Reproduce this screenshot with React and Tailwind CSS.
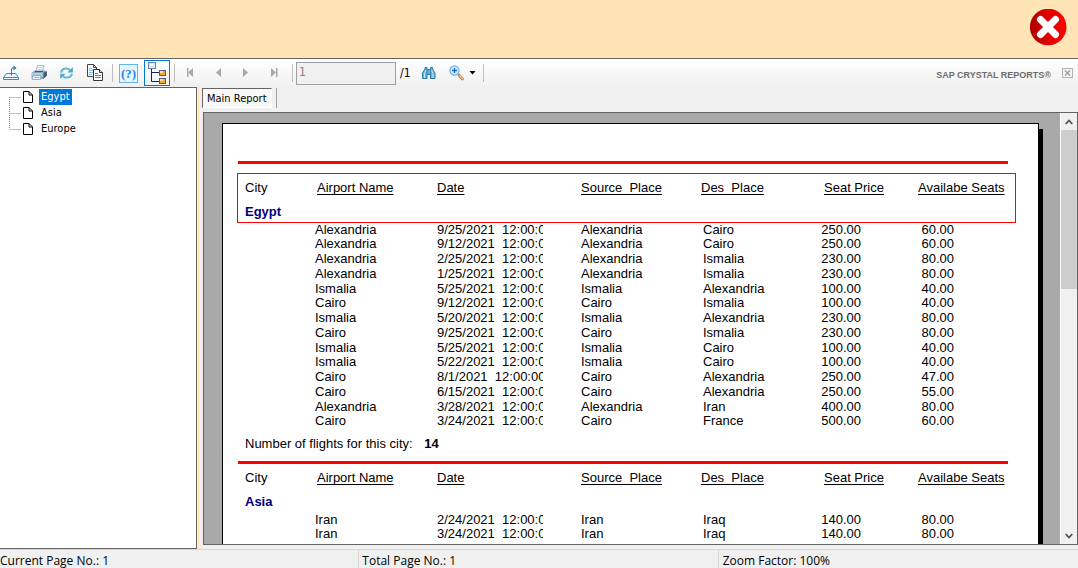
import React from "react";

const groups = [
  {
    name: "Egypt",
    selected: true,
    count: 14,
    rows: [
      ["Alexandria", "9/25/2021", "Alexandria", "Cairo", "250.00", "60.00"],
      ["Alexandria", "9/12/2021", "Alexandria", "Cairo", "250.00", "60.00"],
      ["Alexandria", "2/25/2021", "Alexandria", "Ismalia", "230.00", "80.00"],
      ["Alexandria", "1/25/2021", "Alexandria", "Ismalia", "230.00", "80.00"],
      ["Ismalia", "5/25/2021", "Ismalia", "Alexandria", "100.00", "40.00"],
      ["Cairo", "9/12/2021", "Cairo", "Ismalia", "100.00", "40.00"],
      ["Ismalia", "5/20/2021", "Ismalia", "Alexandria", "230.00", "80.00"],
      ["Cairo", "9/25/2021", "Cairo", "Ismalia", "230.00", "80.00"],
      ["Ismalia", "5/25/2021", "Ismalia", "Cairo", "100.00", "40.00"],
      ["Ismalia", "5/22/2021", "Ismalia", "Cairo", "100.00", "40.00"],
      ["Cairo", "8/1/2021", "Cairo", "Alexandria", "250.00", "47.00"],
      ["Cairo", "6/15/2021", "Cairo", "Alexandria", "250.00", "55.00"],
      ["Alexandria", "3/28/2021", "Alexandria", "Iran", "400.00", "80.00"],
      ["Cairo", "3/24/2021", "Cairo", "France", "500.00", "60.00"],
    ],
  },
  {
    name: "Asia",
    rows: [
      ["Iran", "2/24/2021", "Iran", "Iraq", "140.00", "80.00"],
      ["Iran", "3/24/2021", "Iran", "Iraq", "140.00", "80.00"],
    ],
  },
];

function Separator() {
  return <span className="h-[18px] w-px shrink-0 bg-[#bdbdbd]" />;
}

function ToolButton({ label, disabled, children }) {
  return (
    <button type="button" aria-label={label} disabled={disabled} className="flex size-4 shrink-0 items-center justify-center">
      {children}
    </button>
  );
}

function ExportIcon() {
  return (
    <svg viewBox="0 0 16 16" className="size-4" fill="none">
      <path d="M3.5 8.5h9l3 4v2H.5v-2z" fill="#e8f4fb" stroke="#3f8fb5" />
      <path d="M.5 12.5h15" stroke="#3f8fb5" />
      <path d="M8.500 10.500V4q0-1 1-1h2" stroke="#2b7fae" />
      <path d="M10.500 0.500l3 2.500-3 2.500z" fill="#2b7fae" />
    </svg>
  );
}

function PrintIcon() {
  return (
    <svg viewBox="0 0 16 16" className="size-4" fill="none">
      <path d="M5 6.500l1.500-6h6.500l-1.500 6z" fill="#f4f9ff" stroke="#8eacd0" strokeWidth="0.8" />
      <path d="M7.500 2.500h4M7 4.500h4" stroke="#a8c2e4" strokeWidth="0.7" />
      <path d="M.5 8l3-2.500h10.500l1.800 1v4L12.500 14H2L.5 13z" fill="#8fa5c6" />
      <path d="M4 6.500h8" stroke="#44546e" />
      <path d="M1 8h11v3.500H1z" fill="#bccbe2" />
      <path d="M12.500 8l3.300-1.800v4.400L12.500 14z" fill="#3f5680" />
      <path d="M2 10.500h8l-.5 4H1z" fill="#f2f8ff" stroke="#6f92c2" strokeWidth="0.7" />
      <path d="M3 12.500h5.500" stroke="#7fbdf0" />
      <path d="M11 9.300h1.500" stroke="#4fd46a" />
    </svg>
  );
}

function RefreshIcon() {
  return (
    <svg viewBox="0 0 16 16" className="size-4" fill="none">
      <path d="M2 7.500C3 3.500 8 2.500 11 5" stroke="#4aa9cc" strokeWidth="2" />
      <path d="M2.500 7C3.500 4.200 7.800 3 10.500 5" stroke="#a5e0f3" strokeWidth="0.800" />
      <path d="M13.800 2v5.500H8.500z" fill="#4aa6ca" />
      <path d="M13 8.800C12 12.800 7 13.600 4.200 11.200" stroke="#4aa9cc" strokeWidth="2" />
      <path d="M12.500 9.500C11.500 12 7.400 13 4.800 11.200" stroke="#a5e0f3" strokeWidth="0.800" />
      <path d="M1.200 14V8.800h5.300z" fill="#4aa6ca" />
    </svg>
  );
}

function CopyIcon() {
  return (
    <svg viewBox="0 0 16 18" className="h-[18px] w-4 shrink-0" fill="none">
      <path d="M.5.5h6l3 3v9h-9z" fill="#fff" stroke="#444" />
      <path d="M6.5.5v3h3" stroke="#444" />
      <path d="M2 4.500h3M2 6.500h5M2 8.500h5M2 10.500h3" stroke="#84c0e6" />
      <path d="M6.500 5.500h6l3 3v8h-9z" fill="#fff" stroke="#333" />
      <path d="M12.500 5.500v3h3" fill="#c7e3f4" stroke="#333" />
      <path d="M8 9.500h3M8 11.500h6M8 13.500h6" stroke="#2f8ecb" />
    </svg>
  );
}

function TreeIcon() {
  return (
    <svg viewBox="0 0 20 22" className="h-[22px] w-5" fill="none">
      <path d="M4.500 7v12.500H12M4.500 10.500H12" stroke="#16215c" />
      <rect x="1.500" y=".5" width="7" height="6" fill="#dce5fa" stroke="#7181bb" />
      <path d="M3 2h3v2H3z" fill="#fff" />
      <rect x="12.500" y="8.500" width="6" height="5" fill="#ffa322" stroke="#555b86" />
      <path d="M13 9h3v2h-3z" fill="#ffe3a6" />
      <rect x="12.500" y="16.500" width="6" height="5" fill="#ffa322" stroke="#555b86" />
      <path d="M13 17h3v2h-3z" fill="#ffe3a6" />
    </svg>
  );
}

function BinocularsIcon() {
  return (
    <svg viewBox="0 0 16 16" className="size-4" fill="none">
      <path d="M1.500 13.500V8L4 4V2.500h2v2h3.500v-2h2V4L14 8v5.500H9.500V9.500h-3.500v4z" fill="#6bb4dc" stroke="#2c7cab" />
      <path d="M3.500 13V8.500L5 5M12 13V8.500L10.500 5" stroke="#c3e8f9" />
      <path d="M6 4.500v5M9.500 4.500v5" stroke="#2c7cab" />
    </svg>
  );
}

function ZoomIcon() {
  return (
    <svg viewBox="0 0 16 16" className="size-4" fill="none">
      <path d="M10 10l3.500 4" stroke="#b58256" strokeWidth="2.800" strokeLinecap="round" />
      <path d="M10.500 10.200l3 3.500" stroke="#fbc88a" strokeWidth="1.300" strokeLinecap="round" />
      <circle cx="5.500" cy="5.500" r="4.600" fill="#cfeaff" stroke="#6fb1e2" strokeWidth="1.200" />
      <path d="M5.500 3v5M3 5.500h5" stroke="#1d68b8" strokeWidth="1.300" />
    </svg>
  );
}

function NavIcon({ back, bar }) {
  return (
    <svg viewBox="0 0 16 16" className="size-4" fill="#a9a9a9">
      {back ? <path d="M11 3v9L6 7.500z" /> : <path d="M5 3v9L10 7.500z" />}
      {bar && <rect x={back ? 5 : 10} y="3" width="1.500" height="9" />}
    </svg>
  );
}

function Toolbar() {
  return (
    <div className="flex h-7 shrink-0 items-center bg-gradient-to-b from-white to-[#f0f0f0] pr-[5px] pl-[3px]">
      <div className="flex items-center gap-3">
        <ToolButton label="Export report"><ExportIcon /></ToolButton>
        <ToolButton label="Print report"><PrintIcon /></ToolButton>
        <ToolButton label="Refresh"><RefreshIcon /></ToolButton>
        <ToolButton label="Copy"><CopyIcon /></ToolButton>
      </div>
      <div className="flex items-center gap-[6px] pr-1 pl-[9px]">
        <Separator />
        <button type="button" aria-label="Help" className="flex size-[19px] items-center justify-center border border-[#64b5f8] bg-[#e9f5ff] font-['Liberation_Serif',serif] text-[13px] leading-none font-bold text-[#2389e8]">
          (?)
        </button>
        <button type="button" aria-label="Toggle group tree" aria-pressed="true" className="flex size-[26px] items-center justify-center border border-[#0078d7]">
          <TreeIcon />
        </button>
      </div>
      <Separator />
      <div className="flex items-center gap-3 pr-[10px] pl-[7px]">
        <ToolButton label="First page" disabled><NavIcon back bar /></ToolButton>
        <ToolButton label="Previous page" disabled><NavIcon back /></ToolButton>
        <ToolButton label="Next page" disabled><NavIcon /></ToolButton>
        <ToolButton label="Last page" disabled><NavIcon bar /></ToolButton>
      </div>
      <Separator />
      <input
        aria-label="Page number"
        defaultValue="1"
        disabled
        className="ml-[3px] h-[23px] w-[100px] border border-[#a0a0a0] bg-[#f0f0f0] px-[2px] pb-[2px] text-[12px] text-[#8a7a90]"
      />
      <span className="w-[25px] pl-1 text-[12px]">/1</span>
      <ToolButton label="Find text"><BinocularsIcon /></ToolButton>
      <button type="button" aria-label="Zoom" className="mr-[7px] ml-3 flex items-center gap-1">
        <ZoomIcon />
        <svg viewBox="0 0 7 4" className="h-1 w-[7px]"><path d="M.5 0h6L3.500 3.500z" fill="#000" /></svg>
      </button>
      <Separator />
      <span className="ml-auto pt-[3px] font-['Liberation_Sans',sans-serif] text-[9px] leading-4 font-bold whitespace-nowrap text-[#6d6d6d]">
        SAP CRYSTAL REPORTS®
      </span>
      <button type="button" aria-label="Close view" className="ml-[11px]">
        <svg viewBox="0 0 11 10" className="h-[10px] w-[11px]" fill="none">
          <rect x=".5" y=".5" width="10" height="9" fill="#f3f3f3" stroke="#b4b4b4" />
          <path d="M3 2.500l5 5M8 2.500l-5 5" stroke="#9a9a9a" strokeWidth="1.200" />
        </svg>
      </button>
    </div>
  );
}

function GroupTree() {
  const names = ["Egypt", "Asia", "Europe"];
  const lines = ["M.5 8v8M.5 8.500h11", "M.5 0v16M.5 8.500h11", "M.5 0v8M.5 8.500h11"];
  return (
    <nav aria-label="Groups" className="w-[197px] shrink-0 border border-l-0 border-[#646464] bg-white">
      <ul className="pt-px pl-[9px]">
        {names.map((name, i) => (
          <li key={name} className="flex h-4 items-center">
            <svg viewBox="0 0 12 16" className="h-4 w-3" fill="none">
              <path d={lines[i]} stroke="#808080" strokeDasharray="1 1" />
            </svg>
            <svg viewBox="0 0 10 12" className="mx-[2px] h-3 w-[10px]" fill="none">
              <path d="M.5.5h5.500l3.500 3.500v7.500H.5z" fill="#fff" stroke="#000" />
              <path d="M6 .5V4h3.500" stroke="#000" />
            </svg>
            <a
              href={"#" + name}
              className={
                i === 0
                  ? "ml-1 bg-[#0078d7] px-[2px] text-[11px] leading-4 text-white"
                  : "ml-1 px-[2px] text-[11px] leading-4"
              }
            >
              {name}
            </a>
          </li>
        ))}
      </ul>
    </nav>
  );
}

function Heading({ children, className }) {
  return (
    <th scope="col" className={"p-0 pt-[2px] text-left font-normal " + (className || "")}>
      <span className="underline decoration-1 underline-offset-2 [text-decoration-skip-ink:none]">{children}</span>
    </th>
  );
}

function Group({ group }) {
  return (
    <section id={group.name}>
      <div className="mr-[7px] border-t-[3px] border-[#f00]" />
      <table className={"w-full table-fixed border-separate border-spacing-0 whitespace-nowrap " + (group.selected ? "mt-[10px]" : "")}>
        <colgroup>
          <col className="w-[77px]" />
          <col className="w-[122px]" />
          <col className="w-[144px]" />
          <col className="w-[120px]" />
          <col className="w-[120px]" />
          <col className="w-[97px]" />
          <col className="w-[97px]" />
        </colgroup>
        <thead className={group.selected ? "outline-1 outline-[#f00] outline-solid" : ""}>
          <tr className="h-[26px]">
            <th scope="col" className="p-0 pt-[2px] pl-[7px] text-left font-normal">City</th>
            <Heading className="pl-[2px]">Airport Name</Heading>
            <Heading>Date</Heading>
            <Heading>Source_Place</Heading>
            <Heading>Des_Place</Heading>
            <Heading className="pl-[3px]">Seat Price</Heading>
            <Heading>Availabe Seats</Heading>
          </tr>
          <tr className="h-[22px]">
            <th scope="rowgroup" colSpan={7} className="p-0 pt-[2px] pl-[7px] text-left font-bold text-[#000080]">{group.name}</th>
          </tr>
        </thead>
        <tbody className="leading-[14px] [&>tr:nth-child(4n+1)]:h-[15px] [&>tr:nth-child(4n+3)]:h-[15px] [&>tr:nth-child(4n)]:h-[15px]">
          {group.rows.map((r, i) => (
            <tr key={i}>
              <td className="p-0" />
              <td className="p-0">{r[0]}</td>
              <td className="p-0">
                <div className="w-[106px] overflow-hidden whitespace-pre">{r[1] + "  12:00:00AM"}</div>
              </td>
              <td className="p-0">{r[2]}</td>
              <td className="p-0 pl-[2px]">{r[3]}</td>
              <td className="p-0 pr-[57px] text-right">{r[4]}</td>
              <td className="p-0 pr-[61px] text-right">{r[5]}</td>
            </tr>
          ))}
        </tbody>
      </table>
      {group.count && (
        <p className="pt-2 pb-[9px] pl-[7px] leading-4">
          Number of flights for this city: <b className="pl-2">{group.count}</b>
        </p>
      )}
    </section>
  );
}

function ScrollBar() {
  return (
    <div className="flex w-[17px] shrink-0 flex-col border-l border-white bg-[#f0f0f0]">
      <button type="button" aria-label="Scroll up" className="flex h-[17px] items-center justify-center">
        <svg viewBox="0 0 8 6" className="h-[6px] w-2" fill="none"><path d="M.7 5L4 1.500 7.300 5" stroke="#505050" strokeWidth="1.800" /></svg>
      </button>
      <div className="flex-1">
        <div className="h-2/5 bg-[#cdcdcd]" />
      </div>
      <button type="button" aria-label="Scroll down" className="flex h-[17px] items-center justify-center">
        <svg viewBox="0 0 8 6" className="h-[6px] w-2" fill="none"><path d="M.7 1L4 4.500 7.300 1" stroke="#505050" strokeWidth="1.800" /></svg>
      </button>
    </div>
  );
}

export default function App() {
  return (
    <div className="flex h-screen flex-col overflow-hidden bg-[#f0f0f0] font-['DejaVu_Sans_Condensed','DejaVu_Sans',sans-serif] text-black">
      <header className="flex shrink-0 justify-end border-b border-[#646464] bg-[#ffe4b5] pt-2 pr-[11px] pb-3">
        <button type="button" aria-label="Close" className="pt-px">
          <svg viewBox="0 0 37 37" className="size-[37px]">
            <defs>
              <linearGradient id="red" x1="0" x2="1">
                <stop offset="0" stopColor="#a80000" />
                <stop offset=".45" stopColor="#e00000" />
                <stop offset="1" stopColor="#ff0000" />
              </linearGradient>
            </defs>
            <circle cx="18.200" cy="18" r="18.300" fill="url(#red)" />
            <path d="M10.500 10.500l15 15M25.500 10.500l-15 15" stroke="#fff" strokeWidth="7" strokeLinecap="round" />
          </svg>
        </button>
      </header>
      <Toolbar />
      <main className="flex min-h-0 flex-1">
        <GroupTree />
        <div className="w-[3px] shrink-0 border-x border-[#f0f0f0] bg-[#ffe4b5]" />
        <div className="flex min-w-0 flex-1 flex-col pb-1 pl-[3px]">
          <div className="flex shrink-0 items-start gap-1 pt-px pb-[4px]">
            <button type="button" className="-ml-px h-5 border border-t-[#646464] border-r-white border-b-white border-l-[#646464] bg-[#f8f8f8] px-1 pt-px text-[11px] leading-4 whitespace-nowrap">
              Main Report
            </button>
            <span className="h-5 w-px bg-[#a0a0a0]" />
          </div>
          <div className="flex min-h-0 flex-1 border border-[#646464] bg-[#a9a9a9]">
            <div className="min-w-0 flex-1 overflow-hidden pt-[10px] pl-[18px]">
              <article className="min-h-[1056px] w-[817px] border border-black bg-white pt-[37px] pr-[23px] pl-[15px] font-['Liberation_Sans',sans-serif] text-[13px] shadow-[4px_6px_0_#000]">
                {groups.map((g) => (
                  <Group key={g.name} group={g} />
                ))}
              </article>
            </div>
            <ScrollBar />
          </div>
        </div>
      </main>
      <footer className="flex h-[19px] shrink-0 border-t border-[#d7d7d7] font-['Open_Sans','Noto_Sans',sans-serif] text-[12px] leading-[22px] whitespace-nowrap">
        <span className="w-1/3 border-r border-[#d7d7d7]">Current Page No.: 1</span>
        <span className="w-1/3 border-r border-[#d7d7d7] pl-[3px]">Total Page No.: 1</span>
        <span className="flex-1 pl-1">Zoom Factor: 100%</span>
      </footer>
    </div>
  );
}
